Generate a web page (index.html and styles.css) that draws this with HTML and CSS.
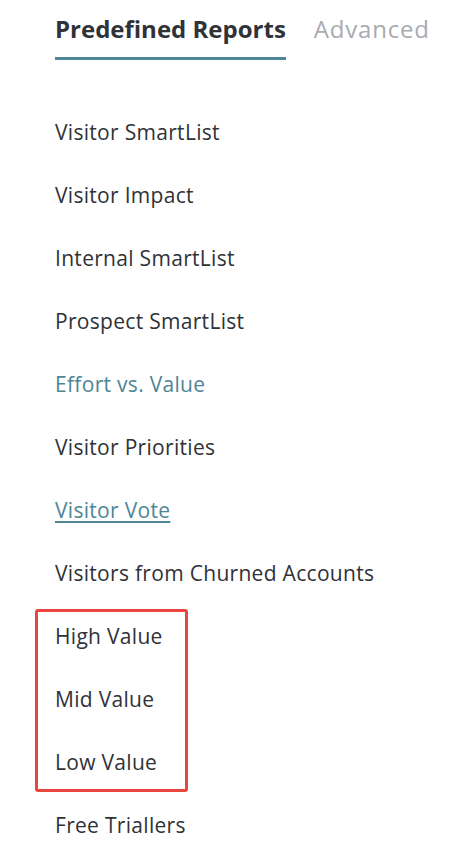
FILE: index.html
```html
<!DOCTYPE html>
<html lang="en">
<head>
    <meta charset="UTF-8">
    <meta name="viewport" content="width=device-width, initial-scale=1.0">
    <title>Reports</title>
    <link rel="stylesheet" href="styles.css">
</head>
<body>

<div class="panel">
    <div class="tabs">
        <span class="tab active">Predefined Reports</span>
        <span class="tab">Advanced</span>
    </div>

    <ul class="report-list">
        <li>Visitor SmartList</li>
        <li>Visitor Impact</li>
        <li>Internal SmartList</li>
        <li>Prospect SmartList</li>
        <li class="link">Effort vs. Value</li>
        <li>Visitor Priorities</li>
        <li class="link underline">Visitor Vote</li>
        <li>Visitors from Churned Accounts</li>
        <li class="highlight">
            <ul>
                <li>High Value</li>
                <li>Mid Value</li>
                <li>Low Value</li>
            </ul>
        </li>
        <li>Free Triallers</li>
    </ul>
</div>

</body>
</html>
```

FILE: styles.css
```css
body {
    margin: 0;
    font-family: "Open Sans", sans-serif;
    background-color: #fff;
    color: #2f3237;
}
.panel {
    padding: 0 0 0 55px;
}
.tabs {
    display: flex;
    gap: 28px;
    padding-top: 12px;
}
.tab {
    font-size: 24px;
    color: #a9abb0;
    letter-spacing: 0.8px;
    padding-bottom: 12px;
    border-bottom: 3px solid transparent;
}
.tab.active {
    font-weight: 700;
    letter-spacing: 0;
    color: #2f3237;
    border-bottom-color: #4e8597;
}
.report-list, .report-list ul {
    list-style: none;
    margin: 0;
    padding: 0;
}
.report-list {
    margin-top: 41px;
}
.report-list li {
    font-size: 21px;
    letter-spacing: 0.3px;
    line-height: 63px;
}
.report-list li.link {
    color: #4e8597;
}
.report-list li.underline {
    text-decoration: underline;
    text-underline-offset: 3px;
}
.report-list li.highlight {
    margin: 4px 0 2px -20px;
    width: 130px;
    padding-left: 17px;
    border: 3px solid #e8463e;
    border-radius: 3px;
}
.report-list li.highlight ul {
    margin: -7px 0 -5px;
}
```
